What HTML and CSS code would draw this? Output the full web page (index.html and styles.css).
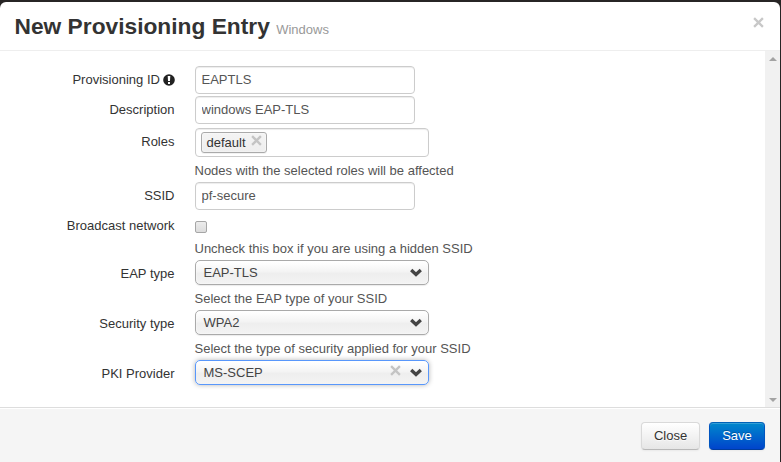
FILE: index.html
```html
<!DOCTYPE html>
<html lang="en">
<head>
<meta charset="utf-8">
<title>New Provisioning Entry</title>
<link rel="stylesheet" href="styles.css">
</head>
<body>
<svg class="defs" width="0" height="0" aria-hidden="true">
  <symbol id="cross" viewBox="0 0 10 10"><path d="M1 1 9 9M9 1 1 9" fill="none" stroke="currentColor" stroke-width="2.1"/></symbol>
  <symbol id="chevron" viewBox="0 0 12 9"><path d="M1.2 2 6 6.4 10.8 2" fill="none" stroke="currentColor" stroke-width="3.3"/></symbol>
</svg>
<div class="modal">
  <header class="modal-header">
    <h3 class="title">New Provisioning Entry <small>Windows</small></h3>
    <button class="close" aria-label="Close dialog"><svg width="11" height="11"><use href="#cross"/></svg></button>
  </header>
  <div class="modal-body">
    <form class="form">
      <div class="row">
        <label class="label">Provisioning ID <svg class="info" width="12" height="12" viewBox="0 0 12 12"><circle cx="6" cy="6" r="5.8" fill="#222"/><path d="M4.7 2h2.6L7 7H5zM5 8h2v2H5z" fill="#fff"/></svg></label>
        <div class="field"><input class="input" type="text" value="EAPTLS"></div>
      </div>
      <div class="row row-description">
        <label class="label">Description</label>
        <div class="field"><input class="input" type="text" value="windows EAP-TLS"></div>
      </div>
      <div class="row row-roles">
        <label class="label">Roles</label>
        <div class="field">
          <div class="tags"><span class="tag">default <svg class="tag-x" width="11" height="11"><use href="#cross"/></svg></span></div>
          <p class="help">Nodes with the selected roles will be affected</p>
        </div>
      </div>
      <div class="row">
        <label class="label">SSID</label>
        <div class="field"><input class="input" type="text" value="pf-secure"></div>
      </div>
      <div class="row row-check">
        <label class="label">Broadcast network</label>
        <div class="field">
          <input class="check" type="checkbox">
          <p class="help">Uncheck this box if you are using a hidden SSID</p>
        </div>
      </div>
      <div class="row row-select">
        <label class="label">EAP type</label>
        <div class="field">
          <div class="select"><span class="value">EAP-TLS</span><svg class="arrow" width="12" height="9"><use href="#chevron"/></svg></div>
          <p class="help">Select the EAP type of your SSID</p>
        </div>
      </div>
      <div class="row row-select">
        <label class="label">Security type</label>
        <div class="field">
          <div class="select"><span class="value">WPA2</span><svg class="arrow" width="12" height="9"><use href="#chevron"/></svg></div>
          <p class="help">Select the type of security applied for your SSID</p>
        </div>
      </div>
      <div class="row row-select">
        <label class="label">PKI Provider</label>
        <div class="field">
          <div class="select focused"><span class="value">MS-SCEP</span><svg class="clear" width="11" height="11"><use href="#cross"/></svg><svg class="arrow" width="12" height="9"><use href="#chevron"/></svg></div>
        </div>
      </div>
    </form>
    <div class="scrollbar"><span class="up"></span><span class="down"></span></div>
  </div>
  <footer class="modal-footer">
    <button class="btn">Close</button>
    <button class="btn btn-primary">Save</button>
  </footer>
</div>
</body>
</html>
```
FILE: styles.css
```css
* { box-sizing: border-box; }
body {
  margin: 0;
  height: 462px;
  padding: 2px 1px 0 0;
  overflow: hidden;
  background: #272525;
  font: 13px/18px "Liberation Sans", Arial, sans-serif;
  color: #333;
}
button, input { font: inherit; }
.defs { display: block; position: absolute; }
.modal {
  height: 460px;
  display: flex;
  flex-direction: column;
  background: #fff;
  border-radius: 6px 6px 0 0;
  overflow: hidden;
}
.modal-header {
  display: flex;
  justify-content: space-between;
  align-items: flex-start;
  height: 49px;
  padding: 9px 16px 0 14.5px;
  border-bottom: 1px solid #eee;
}
.title { margin: 0; font-size: 22.75px; line-height: 30px; font-weight: bold; }
.title small { font-size: 13px; font-weight: normal; color: #999; }
.close { border: 0; padding: 0; margin-top: 6px; background: none; color: #c8c8c8; line-height: 0; }
.modal-body { display: flex; height: 356px; }
.form { flex: 1; padding-top: 15px; }
.row { display: grid; grid-template-columns: 174.5px 1fr; column-gap: 20.5px; height: 30px; }
.row-description { height: 32px; }
.row-roles { height: 54px; }
.row-check { height: 48px; }
.row-select { height: 50px; }
.label { padding-top: 5px; text-align: right; white-space: nowrap; }
.info { display: inline-block; vertical-align: -2px; margin-left: -1px; }
.input {
  display: block;
  width: 220px;
  height: 28px;
  padding: 3px 5.5px 5px;
  border: 1px solid #ccc;
  border-radius: 4px;
  color: #555;
  background: #fff;
  box-shadow: inset 0 1px 1px rgba(0,0,0,.075);
}
.tags {
  width: 234px;
  height: 29px;
  padding: 3px 5px;
  border: 1px solid #ccc;
  border-radius: 4px;
  box-shadow: inset 0 1px 1px rgba(0,0,0,.075);
}
.tag {
  display: flex;
  width: 66px;
  height: 21px;
  padding: 0 4px 0 4.5px;
  justify-content: space-between;
  border: 1px solid #aaa;
  border-radius: 3px;
  background: linear-gradient(#f4f4f4, #eee);
  box-shadow: inset 0 0 2px #fff, 0 1px 0 rgba(0,0,0,.05);
  line-height: 20px;
}
.tag-x { margin-top: 2px; color: #c4c4c4; }
.help { margin: 5px 0 0 -.5px; color: #555; line-height: 18px; white-space: nowrap; }
.check {
  appearance: none;
  display: block;
  width: 12px;
  height: 12px;
  margin: 9px 0 0;
  border: 1px solid #a6a6a6;
  border-radius: 2px;
  background: linear-gradient(#ececec, #dcdcdc);
}
.row-check .help { margin-top: 7px; }
.select {
  display: flex;
  align-items: center;
  width: 234px;
  height: 25px;
  padding: 0 6px 0 7.5px;
  border: 1px solid #aaa;
  border-radius: 5px;
  color: #444;
  background: linear-gradient(#fff 5%, #f4f4f4 45%, #eee 55%, #f3f3f3 100%);
  box-shadow: inset 0 0 2px #fff, 0 1px 1px rgba(0,0,0,.08);
}
.select.focused { border-color: #5897fb; box-shadow: 0 0 5px rgba(0,0,0,.3); }
.value { flex: 1; }
.clear { margin: 0 9px 4px 0; color: #c4c4c4; }
.arrow { color: #444; }
.scrollbar {
  display: flex;
  flex-direction: column;
  justify-content: space-between;
  align-items: center;
  width: 15px;
  padding: 6px 0 5px;
  background: #f1f1f1;
}
.up, .down { border: solid transparent; border-width: 0 4px; }
.up { border-bottom: 4px solid #a3a3a3; }
.down { border-top: 4px solid #a3a3a3; }
.modal-footer {
  display: flex;
  flex: 1;
  justify-content: flex-end;
  align-items: flex-start;
  gap: 9px;
  padding: 14px 15px 0;
  border-top: 1px solid #ddd;
  background: #f5f5f5;
  box-shadow: inset 0 1px 0 #fff;
}
.btn {
  width: 59px;
  height: 28px;
  padding: 0;
  border: 1px solid #ccc;
  border-color: #d9d9d9 #d9d9d9 #b8b8b8;
  border-radius: 4px;
  color: #333;
  background: linear-gradient(#fff, #e6e6e6);
  box-shadow: inset 0 1px 0 rgba(255,255,255,.2), 0 1px 2px rgba(0,0,0,.05);
  text-shadow: 0 1px 1px rgba(255,255,255,.75);
}
.btn-primary {
  width: 56px;
  border-color: #0062b8 #0055c0 #003c9e;
  color: #fff;
  background: linear-gradient(#0088cc, #0044cc);
  text-shadow: 0 -1px 0 rgba(0,0,0,.25);
}
```
